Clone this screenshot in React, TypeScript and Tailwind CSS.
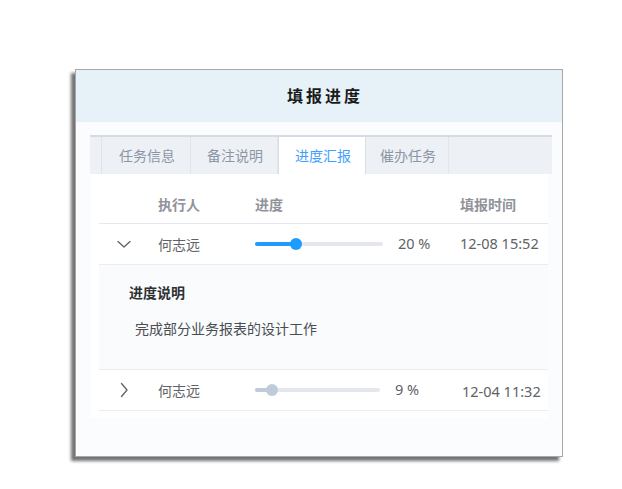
import React from 'react';

interface Report {
  name: string;
  percent: number;
  fill: number;
  track: number;
  time: string;
  open: boolean;
  note?: string;
}

const reports: Report[] = [
  { name: '何志远', percent: 20, fill: 41, track: 128, time: '12-08 15:52', open: true, note: '完成部分业务报表的设计工作' },
  { name: '何志远', percent: 9, fill: 17, track: 125, time: '12-04 11:32', open: false },
];

const tabs = ['任务信息', '备注说明', '进度汇报', '催办任务'];
const tabWidths = ['w-[89px]', 'w-[87px]', 'w-[88px]', 'w-[83px]'];

const Chevron = ({ open }: { open: boolean }) => (
  <svg width="16" height="16" viewBox="0 0 16 16" fill="none" stroke="#606266" strokeWidth="1.3" strokeLinecap="round" strokeLinejoin="round">
    {open ? <path d="M2 5.5l6 5.5 6-5.5" /> : <path d="M5.5 1.5L11 8l-5.5 6.5" />}
  </svg>
);

const Slider = ({ fill, track, active }: { fill: number; track: number; active: boolean }) => (
  <div className="relative h-[4px] rounded-full bg-[#e4e7ed]" style={{ width: track }}>
    <div
      className={active ? 'absolute left-0 top-0 h-full rounded-full bg-[#1e9bff]' : 'absolute left-0 top-0 h-full rounded-full bg-[#c0cbd9]'}
      style={{ width: fill }}
    />
    <div
      className={active ? 'absolute top-1/2 h-[12px] w-[12px] -translate-x-1/2 -translate-y-1/2 rounded-full bg-[#1e9bff]' : 'absolute top-1/2 h-[12px] w-[12px] -translate-x-1/2 -translate-y-1/2 rounded-full bg-[#c0cbd9]'}
      style={{ left: fill }}
    />
  </div>
);

const App: React.FC = () => {
  return (
    <div
      className="h-[489px] w-[622px] bg-white pl-[75px] pt-[69px]"
      style={{ fontFamily: '"Noto Sans", "Noto Sans CJK SC", sans-serif' }}
    >
      {/* Dialog */}
      <div className="flex h-[388px] w-[488px] flex-col border border-[#a8a8a8] bg-[#fbfcfd] shadow-[-4px_4px_3px_rgba(0,0,0,0.55)]">
        <div className="flex h-[52px] items-center justify-center bg-[#e6f1f8] pl-[12px]">
          <h1 className="text-[16px] font-bold tracking-[3px] text-[#1a1a1a]">填报进度</h1>
        </div>

        <div className="pl-[14px] pr-[10px] pt-[13px]">
          {/* Tabs */}
          <div className="flex h-[39px] border-t-2 border-[#d5dbe2] bg-[#edf0f5]">
            <div className="w-[12px] border-r border-[#dfe4ea]" />
            {tabs.map((t, i) => (
              <div
                key={t}
                className={
                  i === 2
                    ? `${tabWidths[i]} flex items-center justify-center border-x border-[#d8dee6] bg-white pl-[2px] text-[14px] text-[#409eff]`
                    : `${tabWidths[i]} flex items-center justify-center border-r border-[#e2e6ec] pl-[2px] text-[14px] text-[#8c96a6]`
                }
              >
                {t}
              </div>
            ))}
          </div>

          {/* Table */}
          <div className="w-[458px] bg-white pb-[7px] pl-[9px] pt-[12px] text-[14px]">
            <div className="flex h-[38px] items-center border-b border-[#e4e7ed] font-bold text-[#909399]">
              <div className="w-[46px]" />
              <div className="w-[97px] pl-[13px]">执行人</div>
              <div className="w-[205px] pl-[13px]">进度</div>
              <div className="pl-[13px]">填报时间</div>
            </div>

            {reports.map((r, idx) => (
              <div key={idx}>
                <div className="flex h-[41px] items-center border-b border-[#e9ecf1] text-[#606266]">
                  <div className="flex w-[46px] justify-center pl-[3px]">
                    <Chevron open={r.open} />
                  </div>
                  <div className="w-[97px] pl-[13px]">{r.name}</div>
                  <div className="flex w-[205px] items-center pl-[13px]">
                    <Slider fill={r.fill} track={r.track} active={r.open} />
                    <span className="ml-[15px] text-[14.5px]">{r.percent} %</span>
                  </div>
                  <div className={r.open ? 'pl-[13px] text-[14.5px]' : 'pl-[15px] pt-[3px] text-[14.5px]'}>{r.time}</div>
                </div>
                {r.open && (
                  <div className="h-[105px] border-b border-[#e9ecf1] bg-[#f9fbfd] pl-[30px] pt-[17px] text-[#303133]">
                    <div className="font-bold">进度说明</div>
                    <div className="mt-[15px] pl-[6px] text-[#4a4d52]">{r.note}</div>
                  </div>
                )}
              </div>
            ))}
          </div>
        </div>
      </div>
    </div>
  );
};

export default App;
